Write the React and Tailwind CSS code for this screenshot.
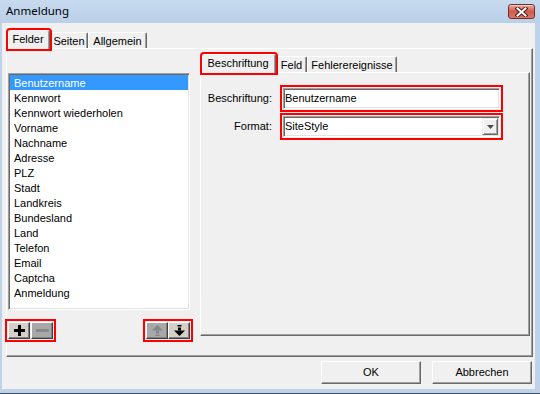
const items = [
  "Benutzername",
  "Kennwort",
  "Kennwort wiederholen",
  "Vorname",
  "Nachname",
  "Adresse",
  "PLZ",
  "Stadt",
  "Landkreis",
  "Bundesland",
  "Land",
  "Telefon",
  "Email",
  "Captcha",
  "Anmeldung",
];

function CloseBtn() {
  return (
    <div className="w-[27px] h-[15px] rounded-[3px] border border-[#6e2e28] bg-gradient-to-b from-[#e9a99f] via-[#cf5b4c] to-[#d9786a] flex items-center justify-center shadow-[inset_0_1px_0_rgba(255,255,255,0.5)]">
      <svg width="13" height="10" viewBox="0 0 13 10">
        <path d="M2.5 1.5 L10.5 8.5 M10.5 1.5 L2.5 8.5" stroke="#4b1d18" strokeWidth="4" strokeLinecap="square" />
        <path d="M2.5 1.5 L10.5 8.5 M10.5 1.5 L2.5 8.5" stroke="#ffffff" strokeWidth="2" strokeLinecap="square" />
      </svg>
    </div>
  );
}

function Tab({ label, selected, w, red }) {
  if (selected) {
    return (
      <div
        className={`relative z-10 h-[19px] -mb-px ${w} bg-[#f0f0f0] border-t border-l border-white border-r border-r-[#696969] shadow-[inset_-1px_0_0_#a0a0a0] rounded-t-[2px] flex items-center justify-center pb-[1px] pr-[2px] ${red ? "outline-2 outline-solid outline-[#ff0000]" : ""}`}
      >
        {label}
      </div>
    );
  }
  return (
    <div
      className={`h-[16px] ${w} border-t border-l border-white border-r border-r-[#696969] shadow-[inset_-1px_0_0_#a0a0a0] rounded-t-[2px] flex items-center justify-center pt-[1px]`}
    >
      {label}
    </div>
  );
}

function SmallBtn({ enabled, children }) {
  return (
    <div
      className={`w-[22px] h-[17px] border border-t-white border-l-white border-r-[#404040] border-b-[#404040] shadow-[inset_-1px_-1px_0_#808080] flex items-center justify-center ${enabled ? "bg-[#d4d0c8]" : "bg-[#a8a8a8]"}`}
    >
      {children}
    </div>
  );
}

function Sunken({ className = "", children }) {
  return (
    <div
      className={`border border-t-[#a0a0a0] border-l-[#a0a0a0] border-r-white border-b-white shadow-[inset_1px_1px_0_#696969,inset_-1px_-1px_0_#e3e3e3] bg-white p-[1px] ${className}`}
    >
      {children}
    </div>
  );
}

function DlgBtn({ children }) {
  return (
    <div className="w-[100px] h-[23px] bg-[#f0f0f0] border border-t-white border-l-white border-r-[#696969] border-b-[#696969] shadow-[inset_-1px_-1px_0_#a0a0a0] flex items-center justify-center">
      {children}
    </div>
  );
}

export default function App() {
  return (
    <div className="w-[540px] h-[394px] flex flex-col bg-[#bed3ea] border-b border-b-[#3d4f63] font-['Liberation_Sans',Arial,sans-serif] text-[11px] text-black leading-none">
      {/* title bar */}
      <div className="h-[23px] flex items-center justify-between pl-[6px] pr-[5px] bg-gradient-to-b from-[#c7daee] to-[#bad0e8]">
        <span className="font-['Noto_Sans',sans-serif] text-[11.5px] text-black pb-[1px]">Anmeldung</span>
        <CloseBtn />
      </div>

      {/* body */}
      <div className="flex-1 ml-[2px] mr-[5px] mb-[4px] bg-[#f0f0f0] flex flex-col">
        {/* outer tabs */}
        <div className="mt-[7px] pl-[6px] h-[18px] flex items-end">
          <Tab label="Felder" selected w="w-[42px]" red />
          <Tab label="Seiten" w="w-[38px]" />
          <Tab label="Allgemein" w="w-[59px]" />
        </div>

        {/* outer panel */}
        <div className="ml-[4px] w-[527px] h-[309px] border-t border-l border-white border-r border-b border-r-[#696969] border-b-[#696969] shadow-[inset_-1px_-1px_0_#a0a0a0] flex items-start">
          {/* left column */}
          <div className="ml-[1px] mt-[24px] w-[182px] flex flex-col">
            <Sunken className="h-[237px]">
              {items.map((it, i) => (
                <div
                  key={it}
                  className={`h-[15px] flex items-center pl-[4px] pt-[1px] ${i === 0 ? "bg-[#3399ff] text-white" : ""}`}
                >
                  {it}
                </div>
              ))}
            </Sunken>
            <div className="mt-[12px] flex justify-between">
              <div className="flex gap-[1px] outline-2 outline-solid outline-[#ff0000] outline-offset-[1px]">
                <SmallBtn enabled>
                  <svg width="11" height="11" viewBox="0 0 11 11">
                    <rect x="4" y="0" width="3" height="11" fill="#000" />
                    <rect x="0" y="4" width="11" height="3" fill="#000" />
                  </svg>
                </SmallBtn>
                <SmallBtn>
                  <svg width="13" height="3" viewBox="0 0 13 3">
                    <rect x="0" y="0" width="13" height="3" fill="#878787" />
                  </svg>
                </SmallBtn>
              </div>
              <div className="flex outline-2 outline-solid outline-[#ff0000] outline-offset-[1px]">
                <SmallBtn>
                  <svg width="11" height="11" viewBox="0 0 11 11">
                    <polygon points="5.5,0 11,5.5 0,5.5" fill="#878787" />
                    <rect x="4" y="5.5" width="3" height="3" fill="#878787" />
                    <rect x="3.5" y="9.5" width="4" height="1.5" fill="#878787" />
                  </svg>
                </SmallBtn>
                <SmallBtn enabled>
                  <svg width="11" height="11" viewBox="0 0 11 11">
                    <rect x="3.5" y="0" width="4" height="1.5" fill="#000" />
                    <rect x="4" y="2.5" width="3" height="3" fill="#000" />
                    <polygon points="0,5.5 11,5.5 5.5,11" fill="#000" />
                  </svg>
                </SmallBtn>
              </div>
            </div>
          </div>

          {/* right column */}
          <div className="ml-[10px] mt-[4px] w-[330px] flex flex-col">
            <div className="pl-[2px] h-[19px] flex items-end">
              <Tab label="Beschriftung" selected w="w-[74px]" red />
              <Tab label="Feld" w="w-[31px]" />
              <Tab label="Fehlerereignisse" w="w-[90px]" />
            </div>
            <div className="h-[264px] border-t border-l border-white border-r border-b border-r-[#696969] border-b-[#696969] shadow-[inset_-1px_-1px_0_#a0a0a0]">
              <div className="mt-[15px] grid grid-cols-[71px_217px] gap-x-[11px] gap-y-[7px] items-center">
                <div className="text-right">Beschriftung:</div>
                <div className="outline-2 outline-solid outline-[#ff0000] outline-offset-[1px]">
                  <Sunken className="h-[21px] flex items-center pl-[1px]">Benutzername</Sunken>
                </div>
                <div className="text-right">Format:</div>
                <div className="outline-2 outline-solid outline-[#ff0000] outline-offset-[1px]">
                  <Sunken className="h-[21px] flex items-center justify-between pl-[1px]">
                    <span>SiteStyle</span>
                    <div className="w-[16px] h-[17px] bg-[#f0f0f0] border border-t-[#f0f0f0] border-l-[#f0f0f0] border-r-[#696969] border-b-[#696969] shadow-[inset_1px_1px_0_#ffffff,inset_-1px_-1px_0_#a0a0a0] flex items-center justify-center">
                      <svg width="7" height="4" viewBox="0 0 7 4">
                        <polygon points="0,0 7,0 3.5,4" fill="#4d4d4d" />
                      </svg>
                    </div>
                  </Sunken>
                </div>
              </div>
            </div>
          </div>
        </div>

        {/* dialog buttons */}
        <div className="mt-[4px] pr-[3px] flex justify-end gap-[11px]">
          <DlgBtn>OK</DlgBtn>
          <DlgBtn>Abbrechen</DlgBtn>
        </div>
      </div>
    </div>
  );
}
